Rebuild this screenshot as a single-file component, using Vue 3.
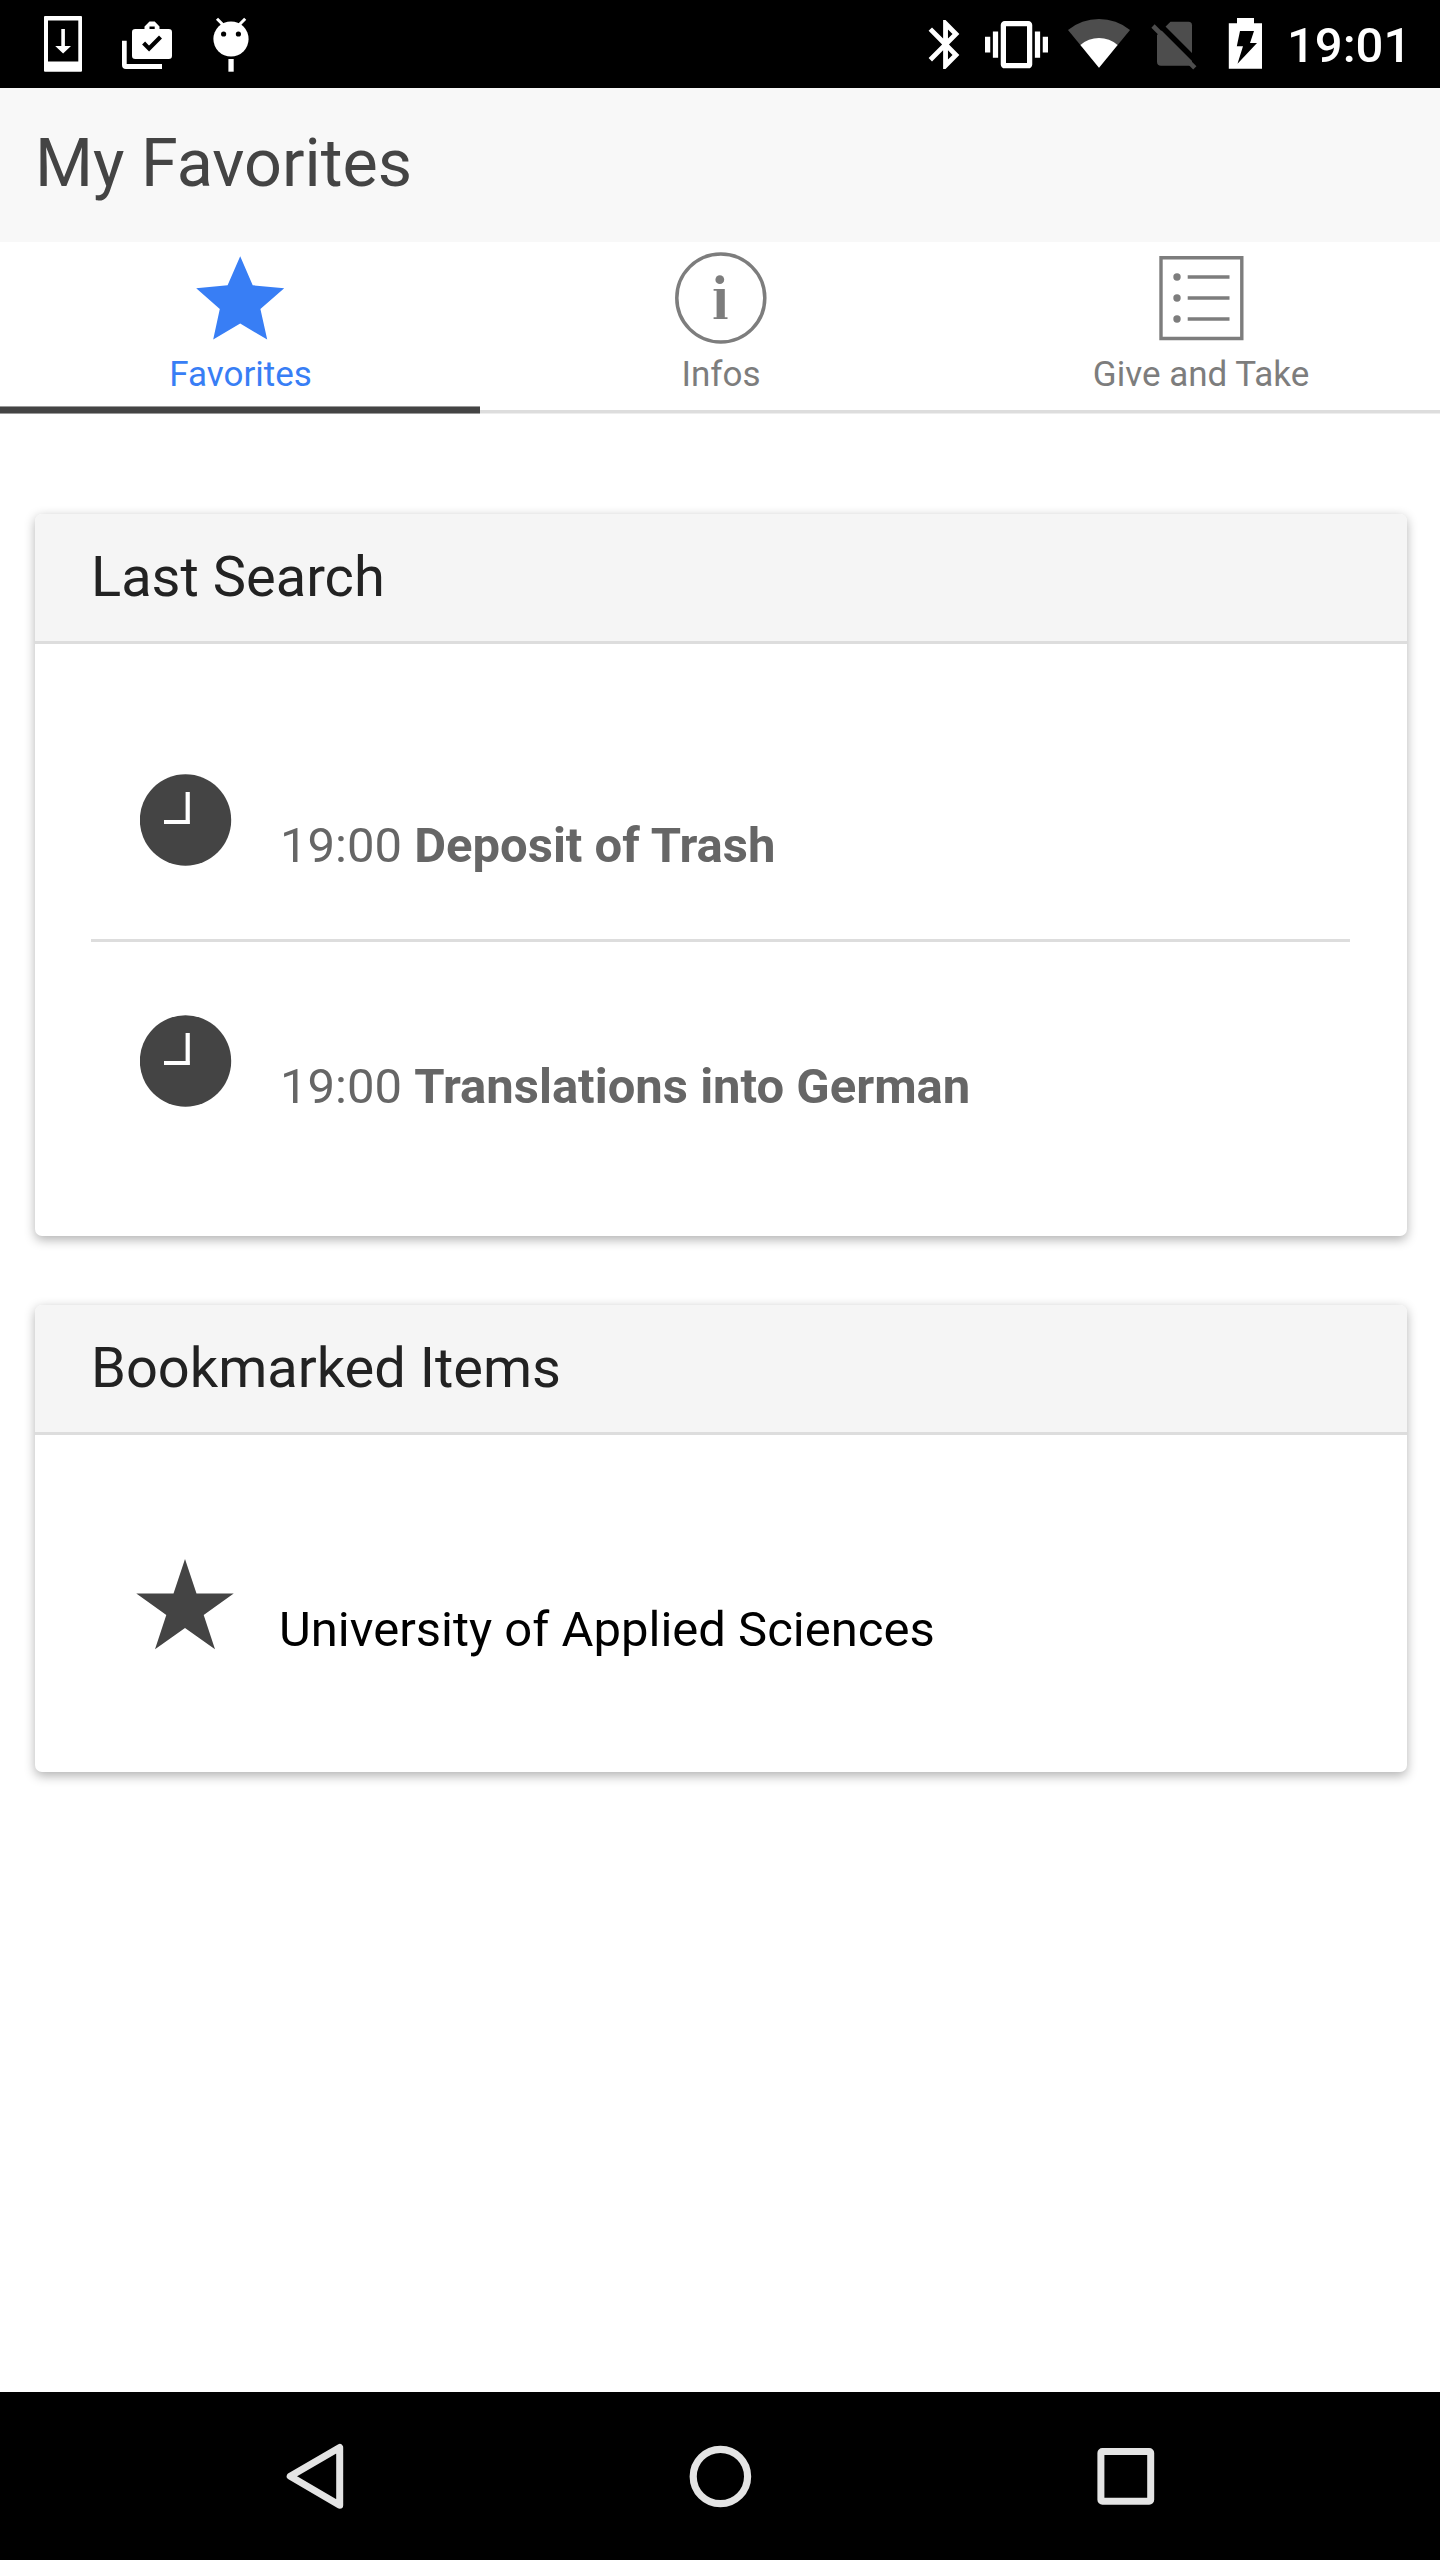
<script setup>
const tabs = [
  { id: 'favorites', label: 'Favorites', active: true },
  { id: 'infos', label: 'Infos', active: false },
  { id: 'give', label: 'Give and Take', active: false },
]

const searches = [
  { time: '19:00', name: 'Deposit of Trash' },
  { time: '19:00', name: 'Translations into German' },
]

const bookmarks = ['University of Applied Sciences']
</script>

<template>
  <div class="screen">
    <div class="status">
      <svg class="notifications" width="260" height="88" viewBox="0 0 260 88" fill="#fff">
        <path fill-rule="evenodd" d="M45 16h36q1 0 1 1v53.700q0 1-1 1h-36q-1 0-1-1v-53.700q0-1 1-1zM48 20.500v41h30.300v-41z" />
        <path d="M61.300 29h3.600v17h6.100l-7.900 7.600-7.900-7.600h6.100z" />
        <path fill-rule="evenodd" d="M144.500 29v-2.500l5-5h5.200l4.800 5v2.500h9.200q3.300 0 3.300 3.300v23.400q0 3.300-3.300 3.300h-33.400q-3.300 0-3.300-3.300v-23.400q0-3.300 3.300-3.300zM149.500 26.500v2.500h5.200v-2.500z" />
        <path d="M143.600 43l5.500 5.600 11.400-11.500" fill="none" stroke="#000" stroke-width="4.200" />
        <path d="M122 40.700h4.700v23.300h35.300v5h-36q-4 0-4-4z" />
        <circle cx="231" cy="39" r="17.600" />
        <path d="M217 18.800l7 7M245.200 18.800l-7 7" stroke="#fff" stroke-width="3" />
        <circle cx="223.600" cy="34" r="2.600" fill="#000" />
        <circle cx="238.400" cy="34" r="2.600" fill="#000" />
        <path d="M228.400 59h5.300v12.700h-5.300z" />
      </svg>
      <svg class="indicators" width="360" height="88" viewBox="920 0 360 88" fill="#fff">
        <path transform="translate(916.500 15.200) scale(2.420 2.440)" d="M17.710 7.710L12 2h-1v7.590L6.410 5 5 6.410 10.590 12 5 17.590 6.410 19 11 14.410V22h1l5.710-5.710-4.300-4.290 4.300-4.290zM13 5.830l1.880 1.880L13 9.590V5.830zm1.880 10.460L13 18.170v-3.760l1.880 1.880z" />
        <path transform="translate(985 13.200) scale(2.625)" d="M0 15h2V9H0v6zm3 2h2V7H3v10zm19-8v6h2V9h-2zm-3 8h2V7h-2v10zM16.500 3h-9C6.670 3 6 3.670 6 4.500v15c0 .830.670 1.500 1.500 1.500h9c.830 0 1.500-.670 1.500-1.500v-15c0-.830-.670-1.500-1.500-1.500zM16 19H8V5h8v14z" />
        <path fill="#4d4d4d" d="M1099 67.700L1068 30A49.200 49.200 0 0 1 1130 30z" />
        <path d="M1099 67.700L1080.400 45A28 28 0 0 1 1117.600 45z" />
        <path fill="#4d4d4d" d="M1170.500 21.700H1188.500q3.500 0 3.500 3.500V65.700H1161q-4 0-4-4V35z" />
        <path d="M1157.500 22.500L1200 65" stroke="#000" stroke-width="5.500" />
        <path d="M1153 26L1194.800 67.800" stroke="#4d4d4d" stroke-width="4.600" />
        <path d="M1237 18h17v5.300h8v45.400h-33.200v-45.400h8.200z" />
        <path fill="#000" d="M1240 31h14l-4 12h7l-19.500 20.700 5.500-17.500h-6.200z" />
      </svg>
      <span class="clock">19:01</span>
    </div>

    <header class="title">My Favorites</header>

    <nav class="tabs">
      <div v-for="tab in tabs" :key="tab.id" class="tab" :class="{ active: tab.active }">
        <svg width="112" height="108" viewBox="-56 0 112 108" fill="currentColor">
          <path v-if="tab.id === 'favorites'" d="M0.200 14.200L12.700 43.300 44.200 46.200 20.400 67 27.200 97.500 0.200 81.600-26.800 97.500-20.200 67-43.800 46.200-12.400 43.300z" />
          <g v-else-if="tab.id === 'infos'">
            <circle cx="0.800" cy="56" r="44" fill="none" stroke="currentColor" stroke-width="3.500" />
            <circle cx="-0.200" cy="37.700" r="4.400" />
            <path d="M-6.400 47H4.800V75.200H7.500V77H-6.400V75.200H-3.400V48.800H-6.400z" />
          </g>
          <g v-else>
            <path d="M-39 15.700h80.800v80.800h-80.800z" fill="none" stroke="currentColor" stroke-width="3.400" />
            <circle v-for="y in [35, 56, 77]" :key="y" cx="-23" :cy="y" r="3.700" />
            <path d="M-12.300 35h41.800M-12.300 56h41.800M-12.300 77h41.800" stroke="currentColor" stroke-width="3.500" />
          </g>
        </svg>
        <span>{{ tab.label }}</span>
      </div>
    </nav>

    <main class="content">
      <section class="card">
        <h2>Last Search</h2>
        <ul class="list">
          <li v-for="item in searches" :key="item.name" class="search">
            <svg width="92" height="92" viewBox="0 0 92 92">
              <circle cx="45.500" cy="46" r="45.700" fill="#444" />
              <path d="M47.700 18v30.200M49.900 48H24" fill="none" stroke="#fff" stroke-width="4.200" />
            </svg>
            <p>{{ item.time }} <b>{{ item.name }}</b></p>
          </li>
        </ul>
      </section>

      <section class="card">
        <h2>Bookmarked Items</h2>
        <ul class="list">
          <li v-for="name in bookmarks" :key="name" class="bookmark">
            <svg width="98" height="91" viewBox="0 0 98 91" fill="#444">
              <path d="M49 0L60.500 34.500H97.700L67.700 56 79 90.300 49 69 19 90.300 30.300 56 .3 34.500H37.500z" />
            </svg>
            <p>{{ name }}</p>
          </li>
        </ul>
      </section>
    </main>

    <footer class="navbar">
      <svg width="80" height="80" viewBox="0 0 80 80" fill="none" stroke="#e4e4e4" stroke-width="7" stroke-linejoin="round">
        <path d="M64.700 11.400V69.300L15.200 40.300z" />
      </svg>
      <svg width="80" height="80" viewBox="0 0 80 80" fill="none" stroke="#e4e4e4" stroke-width="7.200">
        <circle cx="40.400" cy="40.500" r="27.200" />
      </svg>
      <svg width="80" height="80" viewBox="0 0 80 80" fill="none" stroke="#e4e4e4" stroke-width="7">
        <rect x="15.900" y="15.500" width="49.800" height="49.800" rx="1.500" />
      </svg>
    </footer>
  </div>
</template>

<style>
body {
  margin: 0;
  background: #fff;
}
</style>

<style scoped>
.screen {
  display: flex;
  flex-direction: column;
  width: 1440px;
  height: 2560px;
  overflow: hidden;
  background: #fff;
  font-family: Roboto, sans-serif;
}

.status {
  display: flex;
  height: 88px;
  background: #000;
}

.indicators {
  margin-left: 660px;
}

.clock {
  margin-left: 7px;
  color: #fff;
  font-size: 49px;
  font-weight: 500;
  line-height: 92px;
}

.title {
  height: 154px;
  padding-left: 35px;
  background: #f8f8f8;
  color: #444;
  font-size: 66.5px;
  line-height: 150px;
}

.tabs {
  display: flex;
  box-sizing: border-box;
  height: 171px;
  border-bottom: 3px solid #ddd;
  box-shadow: 0 1px #eee;
}

.tab {
  position: relative;
  display: flex;
  flex: 1;
  flex-direction: column;
  align-items: center;
  color: #7d7d7d;
  font-size: 35px;
  line-height: 49px;
}

.tab span {
  margin-left: 2px;
}

.tab.active {
  color: #387ef5;
}

.tab.active span {
  margin-left: 1px;
}

.tab.active::after {
  position: absolute;
  right: 0.5px;
  bottom: -4px;
  left: 0;
  height: 6px;
  border: solid #999;
  border-width: 1px 0;
  background: #444;
  content: '';
}

.content {
  display: flex;
  flex: 1;
  flex-direction: column;
  gap: 69px;
  padding: 101px 33px 0 35px;
}

.card {
  overflow: hidden;
  border-radius: 7px;
  background: #fff;
  box-shadow: 0 3.5px 10.5px rgba(0, 0, 0, 0.3);
}

h2 {
  box-sizing: border-box;
  height: 130px;
  margin: 0;
  padding-left: 56px;
  border-bottom: 3px solid #ddd;
  background: #f5f5f5;
  color: #222;
  font-size: 56px;
  font-weight: 400;
  line-height: 126px;
}

.list {
  margin: 0;
  padding: 57px 57px 56px 56px;
  list-style: none;
}

.search,
.bookmark {
  display: flex;
  box-sizing: border-box;
  font-size: 49px;
  line-height: 70px;
}

.search {
  gap: 48px;
  height: 238px;
  padding: 73px 0 0 49px;
  color: #666;
}

.search:first-child {
  height: 241px;
  border-bottom: 3px solid #ddd;
}

.search p {
  margin: 37px 0 0;
}

.bookmark {
  gap: 45px;
  height: 224px;
  padding: 67px 0 0 45px;
  color: #000;
}

.bookmark p {
  margin: 36px 0 0;
}

b {
  font-weight: 700;
}

.navbar {
  display: flex;
  align-items: center;
  gap: 325px;
  box-sizing: border-box;
  height: 168px;
  padding: 0 0 0 275px;
  background: #000;
}
</style>
